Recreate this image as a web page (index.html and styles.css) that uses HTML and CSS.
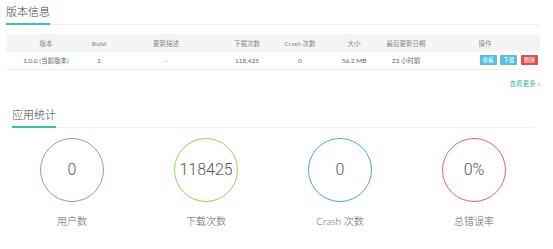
FILE: index.html
```html
<!DOCTYPE html>
<html lang="zh-CN">
<head>
  <meta charset="UTF-8">
  <title>应用详情</title>
  <link rel="stylesheet" href="styles.css">
</head>

<body>

  <section class="panel panel-version">
    <div class="panel-head">
      <h2 class="panel-title">版本信息</h2>
    </div>

    <table class="version-table">
      <colgroup>
        <col style="width: 80px">
        <col style="width: 26px">
        <col style="width: 108px">
        <col style="width: 54px">
        <col style="width: 52px">
        <col style="width: 56px">
        <col style="width: 48px">
        <col style="width: 110px">
      </colgroup>
      <thead>
        <tr>
          <th>版本</th>
          <th>Build</th>
          <th>更新描述</th>
          <th>下载次数</th>
          <th>Crash 次数</th>
          <th>大小</th>
          <th>最后更新日期</th>
          <th>操作</th>
        </tr>
      </thead>
      <tbody>
        <tr>
          <td>1.0.0 (当前版本)</td>
          <td>1</td>
          <td>-</td>
          <td>118,425</td>
          <td>0</td>
          <td>56.2 MB</td>
          <td>23 小时前</td>
          <td class="ops">
            <a href="#" class="btn btn-info">查看</a>
            <a href="#" class="btn btn-info">下载</a>
            <a href="#" class="btn btn-danger">删除</a>
          </td>
        </tr>
      </tbody>
    </table>

    <div class="more">
      <a href="#">查看更多 »</a>
    </div>
  </section>

  <section class="panel panel-stats">
    <div class="panel-head">
      <h2 class="panel-title">应用统计</h2>
    </div>

    <div class="stats">
      <div class="stat">
        <div class="circle purple">0</div>
        <p class="stat-label">用户数</p>
      </div>
      <div class="stat">
        <div class="circle green">118425</div>
        <p class="stat-label">下载次数</p>
      </div>
      <div class="stat">
        <div class="circle blue">0</div>
        <p class="stat-label">Crash 次数</p>
      </div>
      <div class="stat">
        <div class="circle red">0%</div>
        <p class="stat-label">总错误率</p>
      </div>
    </div>
  </section>

</body>
</html>
```

FILE: styles.css
```css
/* Reset */
* {
  margin: 0;
  padding: 0;
  box-sizing: border-box;
}

body {
  background: #fff;
  color: #555;
  font-family: Lato, "Noto Sans CJK SC", sans-serif;
  width: 553px;
}

a {
  text-decoration: none;
}

.panel-version {
  padding: 0 13px 0 6px;
}

.panel-stats {
  padding: 0 18px 0 12px;
}

.panel-head {
  border-bottom: 1px solid #f0f0f0;
}

.panel-title {
  display: inline-block;
  font-size: 11px;
  font-weight: 300;
  color: #444;
  line-height: 14px;
  padding: 5px 0 4px;
  border-bottom: 2px solid #3fc2ab;
  margin-bottom: -1px;
}

.panel-stats .panel-title {
  padding-top: 4px;
}

/* tabela de versões */
.version-table {
  margin-top: 9px;
  width: 534px;
  border-collapse: collapse;
  table-layout: fixed;
  font-size: 6.5px;
  color: #666;
}

.version-table th {
  background: #f5f5f5;
  font-weight: normal;
  color: #888;
  height: 18px;
  text-align: center;
}

.version-table td {
  height: 17px;
  text-align: center;
  border-bottom: 1px solid #f0f0f0;
}

.version-table td.ops {
  text-align: right;
  padding-right: 2px;
}

.btn {
  display: inline-block;
  font-size: 5.5px;
  line-height: 10px;
  padding: 0 3px;
  color: #fff;
  border-radius: 1px;
  margin-left: 2px;
}

.btn-info {
  background: #5bc0de;
}

.btn-danger {
  background: #d9534f;
}

.more {
  text-align: right;
  font-size: 6.5px;
  line-height: 8px;
  padding-top: 10px;
  height: 33px;
}

.more a {
  color: #3fb8a2;
}

/* estatísticas */
.stats {
  display: grid;
  grid-template-columns: repeat(4, 134px);
  margin: 10px 0 0 -7px;
}

.stat {
  display: flex;
  flex-direction: column;
  align-items: center;
}

.circle {
  width: 64px;
  height: 64px;
  border-radius: 50%;
  border: 1px solid #ccc;
  display: flex;
  align-items: center;
  justify-content: center;
  font-family: Roboto, sans-serif;
  font-weight: 300;
  font-size: 16px;
  color: #555;
}

.circle.purple { border-color: #a88ad8; }
.circle.green  { border-color: #94d35a; }
.circle.blue   { border-color: #4fa3e0; }
.circle.red    { border-color: #e86466; }

.stat-label {
  margin-top: 12px;
  font-size: 10px;
  line-height: 14px;
  font-weight: 300;
  color: #666;
}
```
